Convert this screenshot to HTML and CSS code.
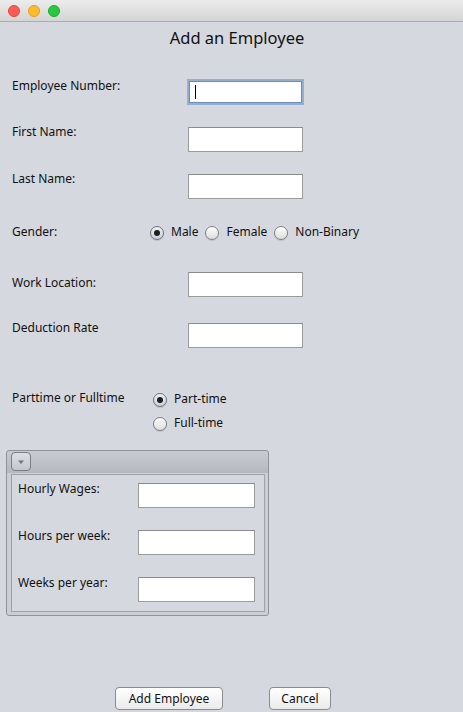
FILE: index.html
```html
<!DOCTYPE html>
<html>
<head>
<meta charset="utf-8">
<title>Add an Employee</title>
<link rel="stylesheet" href="styles.css">
</head>
<body>
<div class="window">
  <div class="titlebar">
    <span class="light red"></span>
    <span class="light yellow"></span>
    <span class="light green"></span>
  </div>
  <h1 class="heading">Add an Employee</h1>

  <div class="form">
    <div class="row r1">
      <span class="label">Employee Number:</span>
      <div class="field focus"><span class="caret"></span></div>
    </div>
    <div class="row r2">
      <span class="label">First Name:</span>
      <div class="field mt2"></div>
    </div>
    <div class="row r3">
      <span class="label">Last Name:</span>
      <div class="field mt2"></div>
    </div>
    <div class="row r-gender">
      <span class="label label-gender">Gender:</span>
      <div class="radio-inline">
        <span class="opt"><span class="radio on"><span class="dot"></span></span>Male</span>
        <span class="opt"><span class="radio"></span>Female</span>
        <span class="opt"><span class="radio"></span>Non-Binary</span>
      </div>
    </div>
    <div class="row r-work">
      <span class="label mt4">Work Location:</span>
      <div class="field"></div>
    </div>
    <div class="row r-ded">
      <span class="label">Deduction Rate</span>
      <div class="field mt2"></div>
    </div>
    <div class="row r-part">
      <span class="label label-part">Parttime or Fulltime</span>
      <div class="radio-stack">
        <span class="opt"><span class="radio on"><span class="dot"></span></span>Part-time</span>
        <span class="opt"><span class="radio"></span>Full-time</span>
      </div>
    </div>
  </div>

  <div class="panel">
    <div class="panel-head">
      <span class="toggle">
        <svg width="8" height="6" viewBox="0 0 8 6"><path d="M1 1.5 L7 1.5 L4 5 Z" fill="#6f7278"/></svg>
      </span>
    </div>
    <div class="panel-body">
      <div class="irow ir1">
        <span class="ilabel">Hourly Wages:</span>
        <div class="ifield"></div>
      </div>
      <div class="irow ir2">
        <span class="ilabel">Hours per week:</span>
        <div class="ifield"></div>
      </div>
      <div class="irow ir3">
        <span class="ilabel">Weeks per year:</span>
        <div class="ifield"></div>
      </div>
    </div>
  </div>

  <div class="buttons">
    <span class="btn btn-add">Add Employee</span>
    <span class="btn btn-cancel">Cancel</span>
  </div>
</div>
</body>
</html>
```

FILE: styles.css
```css
* { box-sizing: border-box; }

html, body {
  margin: 0;
  padding: 0;
}

body {
  background: #d5d8df;
  font-family: "Noto Sans", "DejaVu Sans", sans-serif;
  font-size: 12px;
  color: #111;
}

.window {
  width: 463px;
  height: 712px;
  overflow: hidden;
  background: #d5d8df;
}

.titlebar {
  height: 22px;
  border-bottom: 1px solid #adadad;
  background: linear-gradient(#ececec, #d4d4d4);
  display: flex;
  align-items: flex-start;
  padding: 5px 0 0 8px;
  gap: 8px;
}

.light {
  width: 12px;
  height: 12px;
  border-radius: 50%;
  display: block;
}
.red { background: #fc5b57; border: 1px solid #e2463f; }
.yellow { background: #fdbc2e; border: 1px solid #e1a116; }
.green { background: #2ac83f; border: 1px solid #16ab2a; }

.heading {
  margin: 6px 0 0 0;
  padding-left: 11px;
  font-size: 16.5px;
  font-weight: normal;
  line-height: 20px;
  height: 20px;
  text-align: center;
  color: #111;
}

.form {
  margin-top: 31px;
}

.row {
  display: flex;
  align-items: flex-start;
  padding-left: 12px;
}

.label {
  width: 176px;
  flex: none;
  line-height: 14px;
  white-space: nowrap;
}
.label-gender { width: 138px; }
.label-part { width: 141px; }
.mt4 { margin-top: 4px; }
.mt2 { margin-top: 2px; }

.r1 { height: 46px; }
.r2 { height: 47px; }
.r3 { height: 53px; }
.r-gender { height: 47px; }
.r-work { height: 49px; }
.r-ded { height: 70px; }
.r-part { height: 59px; }

.field {
  width: 115px;
  height: 25px;
  background: #fff;
  border: 1px solid #9b9b9b;
  border-top-color: #8c8c8c;
  flex: none;
}

.field.focus {
  width: 113px;
  height: 22px;
  margin-top: 2px;
  margin-left: 1px;
  border: 1px solid #6e8db6;
  box-shadow: 0 0 0 2px #93afd3;
  display: flex;
  align-items: center;
  padding-left: 5px;
}

.caret {
  width: 1px;
  height: 14px;
  background: #000;
  display: block;
}

.radio-inline {
  display: flex;
  align-items: center;
  gap: 7px;
  line-height: 14px;
}

.radio-stack {
  display: flex;
  flex-direction: column;
  margin-top: 1px;
  line-height: 14px;
}
.radio-stack .opt { height: 24px; }

.opt {
  display: flex;
  align-items: flex-start;
  gap: 7px;
  white-space: nowrap;
}

.radio {
  width: 14px;
  height: 14px;
  margin-top: 1px;
  border-radius: 50%;
  border: 1px solid #7f8186;
  background: linear-gradient(#ffffff, #dcdcdc);
  box-shadow: 0 1px 1px rgba(0,0,0,0.12);
  flex: none;
  display: flex;
  align-items: center;
  justify-content: center;
}
.radio.on {
  background: linear-gradient(#eef1f5, #c9cfd8);
  border-color: #6f737a;
}
.dot {
  width: 6px;
  height: 6px;
  border-radius: 50%;
  background: #1e1e1e;
  display: block;
}

.panel {
  margin-left: 6px;
  width: 263px;
  height: 166px;
  border: 1px solid #8f9298;
  border-radius: 3px;
  background: linear-gradient(#c8cbd1 0, #b5b8bf 22px, #cbced5 22px);
  padding: 0 3px 3px 4px;
}

.panel-head {
  height: 23px;
  padding-top: 1px;
  display: flex;
  align-items: flex-start;
}

.toggle {
  width: 20px;
  height: 19px;
  border: 1px solid #7b7e84;
  border-radius: 4px;
  background: linear-gradient(#dcdfe5, #c3c6cd);
  display: flex;
  align-items: center;
  justify-content: center;
}

.panel-body {
  height: 138px;
  border: 1px solid #9fa2a8;
  background: #d5d8df;
  padding: 7px 0 0 6px;
}

.irow {
  display: flex;
  align-items: flex-start;
}
.ir1, .ir2 { height: 47px; }

.ilabel {
  width: 120px;
  flex: none;
  line-height: 14px;
  white-space: nowrap;
}

.ifield {
  width: 117px;
  height: 25px;
  margin-top: 1px;
  background: #fff;
  border: 1px solid #9b9b9b;
  border-top-color: #8c8c8c;
}

.buttons {
  margin-top: 71px;
  padding-left: 115px;
  display: flex;
  gap: 46px;
}

.btn {
  height: 23px;
  border: 1px solid #8b8b8b;
  border-radius: 4px;
  background: linear-gradient(#ffffff, #ebebeb);
  display: flex;
  align-items: center;
  justify-content: center;
  line-height: 14px;
  color: #111;
}
.btn-add { width: 108px; }
.btn-cancel { width: 62px; }
```
